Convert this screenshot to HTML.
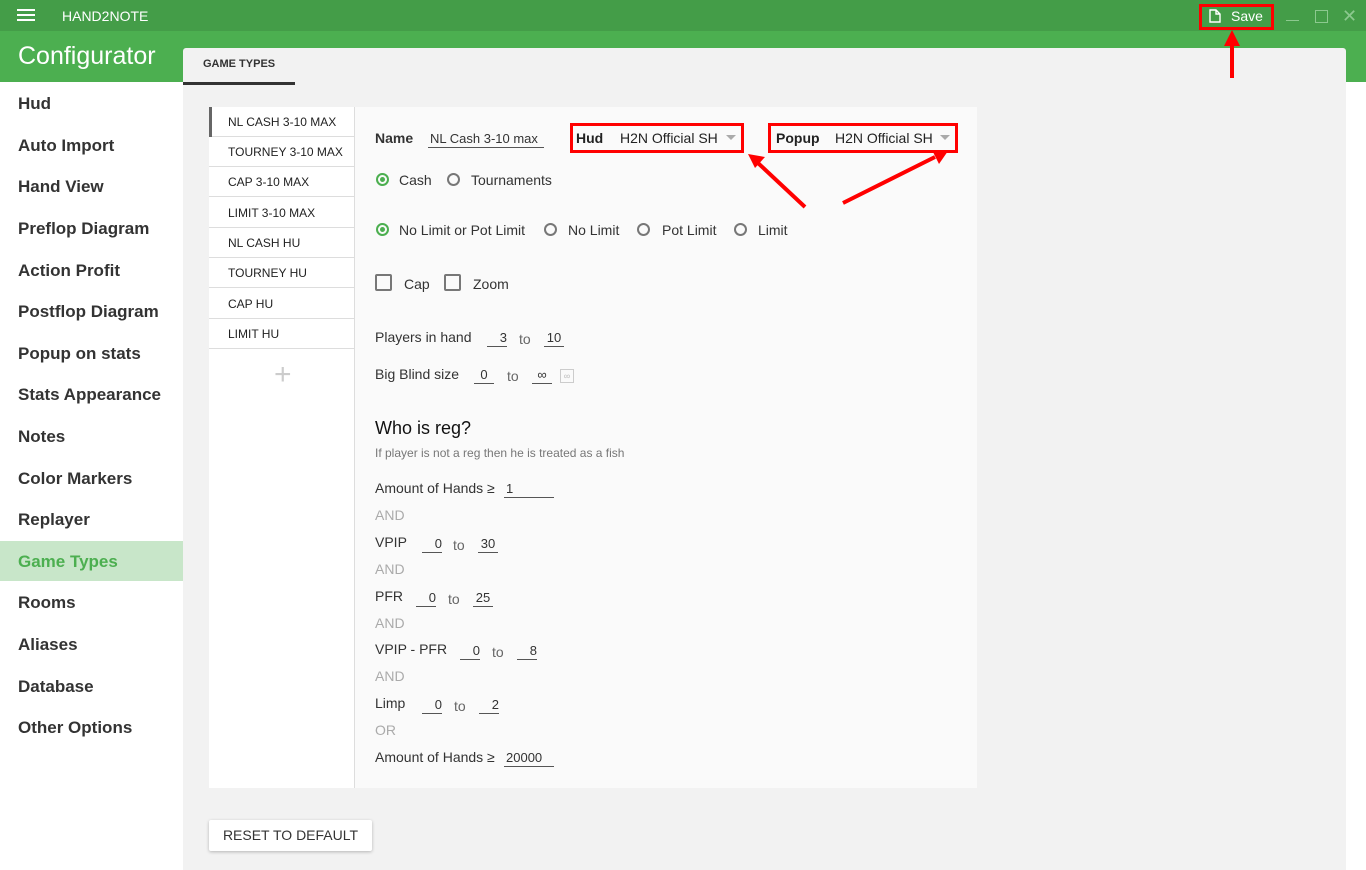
<!DOCTYPE html>
<html><head><meta charset="utf-8"><style>
*{margin:0;padding:0;box-sizing:border-box}
body{width:1366px;height:870px;overflow:hidden;position:relative;font-family:"Liberation Sans",Arial,sans-serif;background:#fff;color:#222}
.a{position:absolute;white-space:nowrap}
.side{font-weight:bold;font-size:17px;color:#333;left:18px}
.li{position:absolute;left:209px;width:145px;height:30px;border-bottom:1px solid #ddd;font-size:12px;color:#222;padding-left:19px;line-height:30px;background:#fff}
.t{font-size:14px;color:#333}
.u{position:absolute;border-bottom:1px solid #555;font-size:13px;color:#333;text-align:center;height:17px;line-height:16px}
.g{font-size:14px;color:#aaa}
.r{position:absolute;width:13px;height:13px;border:2px solid #777;border-radius:50%}
.r.on{border-color:#4caf50}
.r.on::after{content:"";position:absolute;left:2px;top:2px;width:5px;height:5px;border-radius:50%;background:#4caf50}
.c{position:absolute;width:17px;height:17px;border:2px solid #777;border-radius:2px}
</style></head><body>
<div class="a" style="left:0;top:0;width:1366px;height:31px;background:#449d48"></div>
<div class="a" style="left:0;top:31px;width:1366px;height:51px;background:#4caf50"></div>
<div class="a" style="left:17px;top:9px;width:18px;height:2px;background:#fff;box-shadow:0 5px 0 #fff,0 10px 0 #fff"></div>
<div class="a" style="left:62px;top:8px;font-size:14px;color:#fff">HAND2NOTE</div>
<div class="a" style="left:18px;top:42px;font-size:25px;color:#fff">Configurator</div>
<!-- save -->
<div class="a" style="left:1199px;top:4px;width:75px;height:26px;border:3px solid #f00"></div>
<svg class="a" style="left:1209px;top:9px" width="12" height="14"><path d="M1 1h6l4 4v8H1z M7 1v4h4" fill="none" stroke="#fff" stroke-width="1.4"/></svg>
<div class="a" style="left:1231px;top:8px;font-size:14px;color:#fff">Save</div>
<div class="a" style="left:1286px;top:20px;width:13px;height:1px;background:#8cc98f"></div>
<div class="a" style="left:1315px;top:10px;width:13px;height:13px;border:1px solid #8cc98f"></div>
<div class="a" style="left:1342px;top:6px;font-size:18px;color:#8cc98f">✕</div>
<!-- main panel -->
<div class="a" style="left:183px;top:48px;width:1163px;height:822px;background:#f2f2f2;border-radius:3px 3px 0 0"></div>
<div class="a" style="left:203px;top:58px;font-size:11px;font-weight:bold;color:#333">GAME TYPES</div>
<div class="a" style="left:183px;top:82px;width:112px;height:3px;background:#333"></div>
<!-- sidebar -->
<div class="a" style="left:0;top:541px;width:183px;height:40px;background:#c8e6c9"></div>
<div class="a side" style="top:94px">Hud</div>
<div class="a side" style="top:136px">Auto Import</div>
<div class="a side" style="top:177px">Hand View</div>
<div class="a side" style="top:219px">Preflop Diagram</div>
<div class="a side" style="top:261px">Action Profit</div>
<div class="a side" style="top:302px">Postflop Diagram</div>
<div class="a side" style="top:344px">Popup on stats</div>
<div class="a side" style="top:385px">Stats Appearance</div>
<div class="a side" style="top:427px">Notes</div>
<div class="a side" style="top:469px">Color Markers</div>
<div class="a side" style="top:510px">Replayer</div>
<div class="a side" style="top:552px;color:#4caf50">Game Types</div>
<div class="a side" style="top:593px">Rooms</div>
<div class="a side" style="top:635px">Aliases</div>
<div class="a side" style="top:677px">Database</div>
<div class="a side" style="top:718px">Other Options</div>
<!-- card -->
<div class="a" style="left:209px;top:107px;width:768px;height:681px;background:#fafafa"></div>
<div class="a" style="left:209px;top:107px;width:146px;height:681px;background:#fff;border-right:1px solid #ddd"></div>
<div class="li" style="top:107px">NL CASH 3-10 MAX</div>
<div class="a" style="left:209px;top:107px;width:3px;height:30px;background:#666"></div>
<div class="li" style="top:137px">TOURNEY 3-10 MAX</div>
<div class="li" style="top:167px">CAP 3-10 MAX</div>
<div class="li" style="top:198px">LIMIT 3-10 MAX</div>
<div class="li" style="top:228px">NL CASH HU</div>
<div class="li" style="top:258px">TOURNEY HU</div>
<div class="li" style="top:289px">CAP HU</div>
<div class="li" style="top:319px">LIMIT HU</div>
<div class="a" style="left:274px;top:358px;font-size:30px;color:#ccc;font-weight:300">+</div>
<!-- form -->
<div class="a t" style="left:375px;top:130px;font-weight:bold">Name</div>
<div class="u" style="left:428px;top:131px;width:116px;text-align:left;padding-left:2px">NL Cash 3-10 max</div>
<div class="a" style="left:570px;top:123px;width:174px;height:30px;border:3px solid #f00"></div>
<div class="a t" style="left:576px;top:130px;font-weight:bold;color:#222">Hud</div>
<div class="a t" style="left:620px;top:130px;color:#222">H2N Official SH</div>
<div class="a" style="left:726px;top:135px;border:5px solid transparent;border-top-color:#aaa"></div>
<div class="a" style="left:768px;top:123px;width:190px;height:30px;border:3px solid #f00"></div>
<div class="a t" style="left:776px;top:130px;font-weight:bold;color:#222">Popup</div>
<div class="a t" style="left:835px;top:130px;color:#222">H2N Official SH</div>
<div class="a" style="left:940px;top:135px;border:5px solid transparent;border-top-color:#aaa"></div>
<div class="r on" style="left:376px;top:173px"></div><div class="a t" style="left:399px;top:172px">Cash</div>
<div class="r" style="left:447px;top:173px"></div><div class="a t" style="left:471px;top:172px">Tournaments</div>
<div class="r on" style="left:376px;top:223px"></div><div class="a t" style="left:399px;top:222px">No Limit or Pot Limit</div>
<div class="r" style="left:544px;top:223px"></div><div class="a t" style="left:568px;top:222px">No Limit</div>
<div class="r" style="left:637px;top:223px"></div><div class="a t" style="left:662px;top:222px">Pot Limit</div>
<div class="r" style="left:734px;top:223px"></div><div class="a t" style="left:758px;top:222px">Limit</div>
<div class="c" style="left:375px;top:274px"></div><div class="a t" style="left:404px;top:276px">Cap</div>
<div class="c" style="left:444px;top:274px"></div><div class="a t" style="left:473px;top:276px">Zoom</div>
<div class="a t" style="left:375px;top:329px">Players in hand</div>
<div class="u" style="left:487px;top:330px;width:20px;text-align:right">3</div>
<div class="a t" style="left:519px;top:331px;color:#666">to</div>
<div class="u" style="left:544px;top:330px;width:20px">10</div>
<div class="a t" style="left:375px;top:366px">Big Blind size</div>
<div class="u" style="left:474px;top:367px;width:20px">0</div>
<div class="a t" style="left:507px;top:368px;color:#666">to</div>
<div class="u" style="left:532px;top:367px;width:20px">∞</div>
<div class="a" style="left:560px;top:369px;width:14px;height:14px;border:1px solid #ccc;font-size:9px;color:#bbb;text-align:center;line-height:12px">∞</div>
<div class="a" style="left:375px;top:418px;font-size:18px;color:#111">Who is reg?</div>
<div class="a" style="left:375px;top:446px;font-size:12px;color:#777">If player is not a reg then he is treated as a fish</div>
<div class="a t" style="left:375px;top:480px">Amount of Hands ≥</div>
<div class="u" style="left:504px;top:481px;width:50px;text-align:left;padding-left:2px">1</div>
<div class="a g" style="left:375px;top:507px">AND</div>
<div class="a t" style="left:375px;top:534px">VPIP</div>
<div class="u" style="left:422px;top:536px;width:20px;text-align:right">0</div>
<div class="a t" style="left:453px;top:537px;color:#666">to</div>
<div class="u" style="left:478px;top:536px;width:20px">30</div>
<div class="a g" style="left:375px;top:561px">AND</div>
<div class="a t" style="left:375px;top:588px">PFR</div>
<div class="u" style="left:416px;top:590px;width:20px;text-align:right">0</div>
<div class="a t" style="left:448px;top:591px;color:#666">to</div>
<div class="u" style="left:473px;top:590px;width:20px">25</div>
<div class="a g" style="left:375px;top:615px">AND</div>
<div class="a t" style="left:375px;top:641px">VPIP - PFR</div>
<div class="u" style="left:460px;top:643px;width:20px;text-align:right">0</div>
<div class="a t" style="left:492px;top:644px;color:#666">to</div>
<div class="u" style="left:517px;top:643px;width:20px;text-align:right">8</div>
<div class="a g" style="left:375px;top:668px">AND</div>
<div class="a t" style="left:375px;top:695px">Limp</div>
<div class="u" style="left:422px;top:697px;width:20px;text-align:right">0</div>
<div class="a t" style="left:454px;top:698px;color:#666">to</div>
<div class="u" style="left:479px;top:697px;width:20px;text-align:right">2</div>
<div class="a g" style="left:375px;top:722px">OR</div>
<div class="a t" style="left:375px;top:749px">Amount of Hands ≥</div>
<div class="u" style="left:504px;top:750px;width:50px;text-align:left;padding-left:2px">20000</div>
<div class="a" style="left:209px;top:820px;width:163px;height:31px;background:#fff;box-shadow:0 1px 3px rgba(0,0,0,.25);border-radius:2px;font-size:14px;color:#333;text-align:center;line-height:31px">RESET TO DEFAULT</div>
<svg class="a" style="left:0;top:0" width="1366" height="870">
<g stroke="#f00" stroke-width="4" fill="#f00">
<line x1="1232" y1="78" x2="1232" y2="44"/><polygon points="1224,46 1240,46 1232,30" stroke="none"/>
<line x1="805" y1="207" x2="758" y2="163"/><polygon points="748,154 765,157 755,168" stroke="none"/>
<line x1="843" y1="203" x2="935" y2="157"/><polygon points="948,151 932,150 939,164" stroke="none"/>
</g></svg>
</body></html>
